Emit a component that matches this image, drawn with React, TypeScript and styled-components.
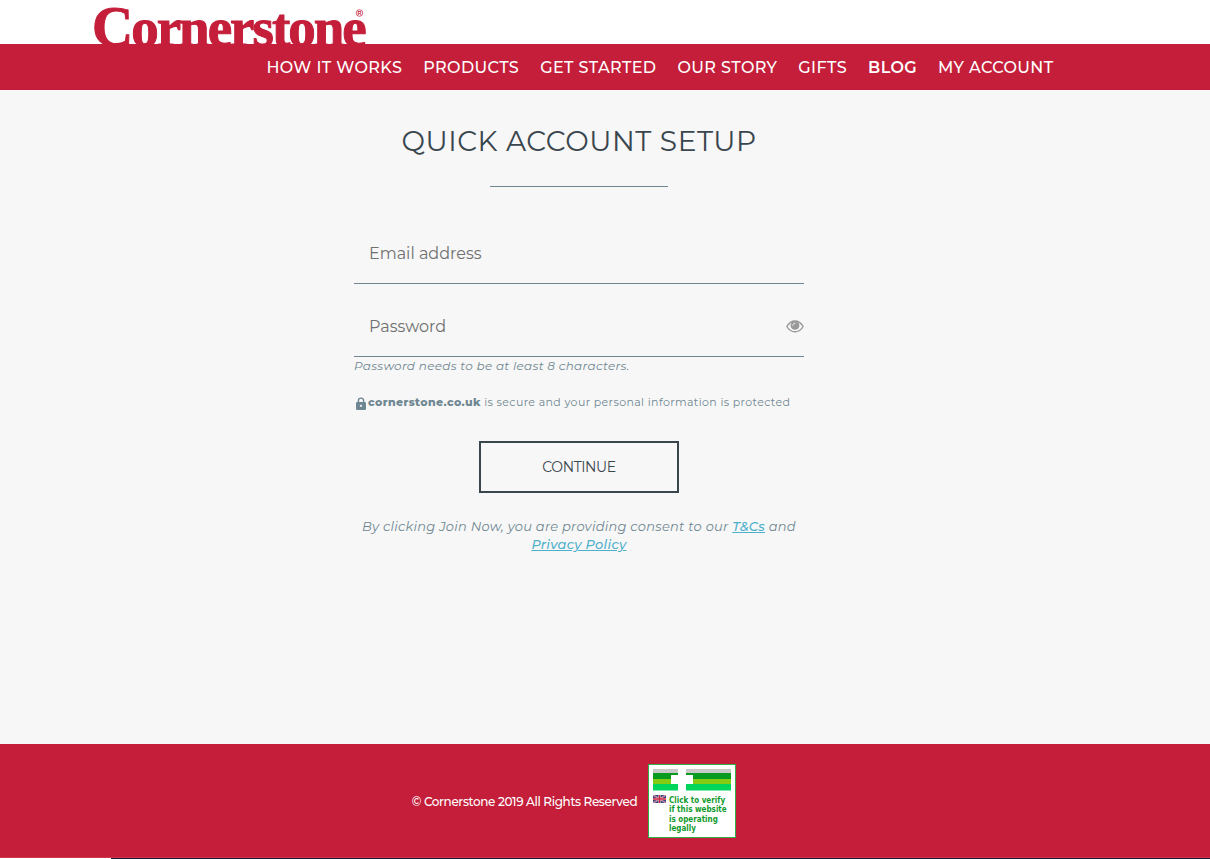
import React from "react";
import styled, { createGlobalStyle } from "styled-components";

const red = "#c41e3a";
const slate = "#6f8792";
const ink = "#3a464e";

const GlobalStyle = createGlobalStyle`
  *, *::before, *::after { box-sizing: border-box; }
  html, body, #root { height: 100%; }
  body {
    margin: 0;
    background: #f7f7f7;
    color: ${ink};
    font-family: Montserrat, Inter, "Liberation Sans", sans-serif;
  }
`;

const Page = styled.div`
  display: flex;
  flex-direction: column;
  min-height: 100%;
`;

const Masthead = styled.header`
  background: #fff;
`;

const Brand = styled.a`
  display: block;
  height: 44px;
  padding-left: 92px;
  overflow: hidden;
`;

const NavBar = styled.nav`
  background: ${red};
`;

const NavList = styled.ul`
  display: flex;
  justify-content: center;
  gap: 21px;
  margin: 0;
  padding: 2px 0 0 110px;
  list-style: none;
`;

const NavLink = styled.a<{ $strong?: boolean }>`
  display: block;
  font-size: 16px;
  line-height: 44px;
  letter-spacing: 0.025em;
  font-weight: ${(p) => (p.$strong ? 600 : 500)};
  color: #fff;
  text-decoration: none;
  text-transform: uppercase;
  white-space: nowrap;
`;

const Main = styled.main`
  flex: 1;
  display: flex;
  flex-direction: column;
  align-items: center;
  padding: 33px 52px 32px 0;
`;

const Title = styled.h1`
  margin: 0;
  font-size: 28px;
  line-height: 36px;
  font-weight: 400;
  letter-spacing: 0.02em;
  text-transform: uppercase;
`;

const Rule = styled.hr`
  width: 178px;
  height: 1px;
  margin: 27px 0 36px;
  border: 0;
  background: ${slate};
`;

const Form = styled.form`
  display: flex;
  flex-direction: column;
  width: 100%;
  max-width: 450px;
`;

const Field = styled.div`
  display: flex;
  align-items: center;
  height: 61px;
  border-bottom: 1px solid ${slate};

  & + & { margin-top: 12px; }
`;

const Input = styled.input`
  flex: 1;
  min-width: 0;
  height: 60px;
  padding: 0 15px;
  border: 0;
  outline: 0;
  background: transparent;
  color: ${ink};
  font: inherit;
  font-size: 16px;

  &::placeholder { color: #707070; opacity: 1; }
`;

const IconButton = styled.button`
  display: flex;
  padding: 0;
  border: 0;
  background: none;
  color: #999;
  cursor: pointer;
`;

const Hint = styled.p`
  margin: 0;
  font-size: 12px;
  line-height: 18px;
  letter-spacing: 0.025em;
  font-style: italic;
  color: ${slate};
`;

const Secure = styled.p`
  display: flex;
  align-items: center;
  gap: 2px;
  margin: 18px 0 0;
  padding-left: 2px;
  font-size: 11px;
  line-height: 18px;
  letter-spacing: 0.035em;
  color: ${slate};
  white-space: nowrap;

  svg { flex: none; margin-top: 3px; }
  b { font-weight: 800; }
`;

const Submit = styled.button`
  align-self: center;
  width: 200px;
  height: 52px;
  margin: 30px 0 24px;
  border: 2px solid ${ink};
  background: transparent;
  color: ${ink};
  font: inherit;
  font-size: 14px;
  letter-spacing: -0.03em;
  text-transform: uppercase;
  cursor: pointer;
`;

const Consent = styled.p`
  margin: 0;
  font-size: 13px;
  line-height: 18px;
  letter-spacing: 0.02em;
  font-style: italic;
  text-align: center;
  color: ${slate};

  a { color: #4fb0cb; font-weight: 500; }
`;

const Footer = styled.footer`
  display: flex;
  justify-content: center;
  align-items: center;
  gap: 11px;
  padding: 20px 62px 19px 0;
  border-bottom: 1px solid #d03a4a;
  background: ${red};
  color: #fff;
  font-size: 12px;
  font-weight: 500;
  letter-spacing: -0.03em;
`;

const BadgeLink = styled.a`
  display: block;
  height: 74px;
  letter-spacing: normal;
`;

const BottomStrip = styled.div`
  height: 1px;
  margin-left: 111px;
  background: #14142b;
`;

const StripBase = styled.div`
  background: #fff;
`;

const links = ["How it works", "Products", "Get started", "Our story", "Gifts", "Blog", "My account"];

const Logo = () => (
  <svg width="280" height="60" viewBox="0 0 280 60" role="img" aria-label="Cornerstone" fill={red}>
    <text
      x="0"
      y="46"
      fontSize="55"
      fontFamily='"Liberation Serif", serif'
      fontWeight="700"
      letterSpacing="-2"
      stroke={red}
      strokeWidth="1"
    >
      <tspan fontSize="57">C</tspan>ornerstone
    </text>
    <circle cx="267.500" cy="13" r="3.300" fill="none" stroke={red} strokeWidth="0.700" />
    <text x="265.600" y="15" fontSize="5.500" fontWeight="700" fontFamily='"Liberation Sans", sans-serif'>R</text>
  </svg>
);

const Eye = () => (
  <svg width="18" height="14" viewBox="0 0 18 14" aria-hidden="true">
    <path d="M.8 7.500C3 3.900 5.800 2 9 2S15 3.900 17.200 7.500C15 11.100 12.200 12.800 9 12.800S3 11.100.8 7.500Z" fill="none" stroke="currentColor" strokeWidth="1.400" />
    <circle cx="9" cy="6.400" r="4.400" fill="currentColor" />
    <path d="M6.700 6.500A2.400 2.400 0 0 1 9 4.100" fill="none" stroke="#f7f7f7" strokeWidth="0.800" strokeLinecap="round" />
  </svg>
);

const Lock = () => (
  <svg width="10" height="13" viewBox="0 0 10 13" aria-hidden="true">
    <path d="M2.400 6V3.700a2.600 2.600 0 0 1 5.200 0V6" fill="none" stroke={slate} strokeWidth="1.400" />
    <rect x="0" y="5" width="10" height="8" rx="1.200" fill={slate} />
    <circle cx="5" cy="8.800" r="1.100" fill="#f7f7f7" />
  </svg>
);

const Badge = () => (
  <svg width="88" height="74" viewBox="0 0 88 74" role="img" aria-label="Click to verify if this website is operating legally">
    <rect x=".5" y=".5" width="87" height="73" fill="#fff" stroke="#2fae4a" />
    <path d="M5 5h78v4H5z" fill="#c9c9c9" />
    <path d="M5 9h78v6H5z" fill="#099a20" />
    <path d="M5 15h78v5H5z" fill="#84cc13" />
    <path d="M5 20h78v6.500H5z" fill="#00d65c" />
    <path d="M30 4h8v7h7v9h-7v7h-8v-7h-7v-9h7z" fill="#fff" />
    <svg x="5" y="31" width="13" height="8" viewBox="0 0 13 8">
      <path d="M0 0h13v8H0z" fill="#39457e" />
      <path d="M0 0l13 8M13 0L0 8" stroke="#d9cfdf" strokeWidth="1.300" />
      <path d="M0 0l13 8M13 0L0 8" stroke="#cc3550" strokeWidth=".6" />
      <path d="M6.500 0v8M0 4h13" stroke="#e8dbe4" strokeWidth="2.200" />
      <path d="M6.500 0v8M0 4h13" stroke="#cc2540" strokeWidth="1.400" />
    </svg>
    <g fontFamily='"DejaVu Sans Condensed", "DejaVu Sans", sans-serif' fontSize="8" fontWeight="700" fill="#119a2c">
      <text x="21" y="39">Click to verify</text>
      <text x="21" y="48">if this website</text>
      <text x="21" y="58">is operating</text>
      <text x="21" y="67">legally</text>
    </g>
  </svg>
);

export default function App() {
  return (
    <>
      <GlobalStyle />
      <Page>
        <Masthead>
          <Brand href="#"><Logo /></Brand>
          <NavBar>
            <NavList>
              {links.map((label) => (
                <li key={label}>
                  <NavLink href="#" $strong={label === "Blog"}>{label}</NavLink>
                </li>
              ))}
            </NavList>
          </NavBar>
        </Masthead>
        <Main>
          <Title>Quick account setup</Title>
          <Rule />
          <Form onSubmit={(e) => e.preventDefault()}>
            <Field>
              <Input type="email" aria-label="Email address" placeholder="Email address" />
            </Field>
            <Field>
              <Input type="password" aria-label="Password" placeholder="Password" />
              <IconButton type="button" aria-label="Show password"><Eye /></IconButton>
            </Field>
            <Hint>Password needs to be at least 8 characters.</Hint>
            <Secure>
              <Lock />
              <span><b>cornerstone.co.uk</b> is secure and your personal information is protected</span>
            </Secure>
            <Submit type="submit">Continue</Submit>
            <Consent>
              By clicking Join Now, you are providing consent to our <a href="#">T&amp;Cs</a> and{" "}
              <a href="#">Privacy Policy</a>
            </Consent>
          </Form>
        </Main>
        <Footer>
          <span>© Cornerstone 2019 All Rights Reserved</span>
          <BadgeLink href="#"><Badge /></BadgeLink>
        </Footer>
        <StripBase><BottomStrip /></StripBase>
      </Page>
    </>
  );
}
